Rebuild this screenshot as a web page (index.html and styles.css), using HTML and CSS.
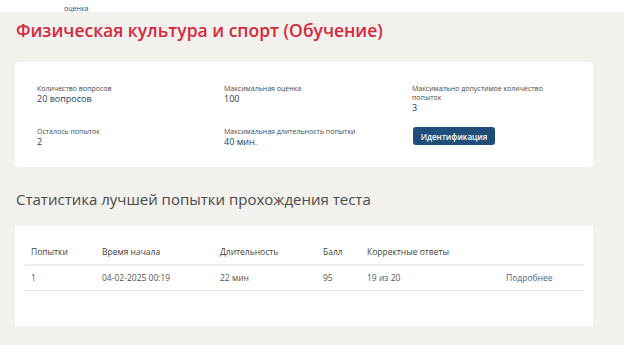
FILE: index.html
```html
<!DOCTYPE html>
<html lang="ru">
<head>
<meta charset="utf-8">
<title>Физическая культура и спорт (Обучение)</title>
<link rel="stylesheet" href="styles.css">
</head>
<body>
<div class="topbar"><span class="top-label">оценка</span></div>
<main class="page">
  <h1 class="title">Физическая культура и спорт (Обучение)</h1>
  <section class="card info-card">
    <div class="info-grid">
      <div class="info-item">
        <div class="info-label">Количество вопросов</div>
        <div class="info-value">20 вопросов</div>
      </div>
      <div class="info-item">
        <div class="info-label">Максимальная оценка</div>
        <div class="info-value">100</div>
      </div>
      <div class="info-item">
        <div class="info-label">Максимально допустимое количество<br>попыток</div>
        <div class="info-value">3</div>
      </div>
      <div class="info-item">
        <div class="info-label">Осталось попыток</div>
        <div class="info-value">2</div>
      </div>
      <div class="info-item">
        <div class="info-label">Максимальная длительность попытки</div>
        <div class="info-value">40 мин.</div>
      </div>
      <div class="info-item">
        <button class="btn-primary" type="button">Идентификация</button>
      </div>
    </div>
  </section>
  <h2 class="section-title">Статистика лучшей попытки прохождения теста</h2>
  <section class="card stats-card">
    <table class="stats-table">
      <colgroup>
        <col class="c-attempt"><col class="c-start"><col class="c-dur"><col class="c-score"><col class="c-correct"><col class="c-more">
      </colgroup>
      <thead>
        <tr><th>Попытки</th><th>Время начала</th><th>Длительность</th><th>Балл</th><th>Корректные ответы</th><th></th></tr>
      </thead>
      <tbody>
        <tr><td>1</td><td>04-02-2025 00:19</td><td>22 мин</td><td>95</td><td>19 из 20</td><td><a class="more-link" href="#">Подробнее</a></td></tr>
      </tbody>
    </table>
  </section>
</main>
</body>
</html>
```
FILE: styles.css
```css
* { box-sizing: border-box; }
html, body { margin: 0; padding: 0; background: #ffffff; }
body { font-family: "Open Sans", "Noto Sans", sans-serif; width: 627px; height: 345px; overflow: hidden; }

.topbar {
  height: 12px;
  overflow: hidden;
  padding: 5px 0 0 64px;
  background: #ffffff;
}
.top-label {
  display: block;
  font-size: 7px;
  line-height: 8px;
  color: #2c4a70;
}

.page {
  width: 624px;
  height: 333px;
  background: #f2f1ee;
  padding: 6px 31px 20px 15px;
}

.title {
  margin: 0 0 20px 1px;
  font-size: 17.5px;
  line-height: 24px;
  font-weight: 600;
  color: #d6283c;
}

.card {
  background: #ffffff;
  border-radius: 3px;
}

.info-card {
  padding: 22px 10px 20px 22px;
}
.info-grid {
  display: grid;
  grid-template-columns: 187px 188px 1fr;
  row-gap: 14px;
  align-items: start;
}
.info-label {
  font-size: 7px;
  line-height: 9px;
  color: #4a4a4a;
}
.info-value {
  font-size: 9px;
  line-height: 11px;
  font-weight: 500;
  color: #1f3b5f;
}
.btn-primary {
  display: block;
  margin: 0 0 0 1px;
  width: 82px;
  height: 18px;
  padding: 0;
  border: 0;
  border-radius: 3px;
  background: #1f4e7a;
  color: #ffffff;
  font-family: "Open Sans", "Noto Sans", sans-serif;
  font-size: 8px;
  font-weight: 600;
}

.section-title {
  margin: 22px 0 17px 1px;
  font-size: 15px;
  line-height: 20px;
  font-weight: 400;
  color: #4a4a4a;
}

.stats-card {
  padding: 14px 9px 35px 10px;
}
.stats-table {
  width: 100%;
  border-collapse: collapse;
  table-layout: fixed;
  font-size: 8.5px;
  line-height: 12px;
}
.c-attempt { width: 71px; }
.c-start { width: 118px; }
.c-dur { width: 103px; }
.c-score { width: 44px; }
.c-correct { width: 139px; }
.stats-table th, .stats-table td {
  text-align: left;
  padding: 6px 6px;
  white-space: nowrap;
}
.stats-table th {
  font-weight: 500;
  color: #3f3f3f;
  border-bottom: 2px solid #ececec;
}
.stats-table td {
  color: #555555;
  border-bottom: 1px solid #e4e4e4;
}
.more-link {
  color: #3b6a96;
  text-decoration: none;
}
```
